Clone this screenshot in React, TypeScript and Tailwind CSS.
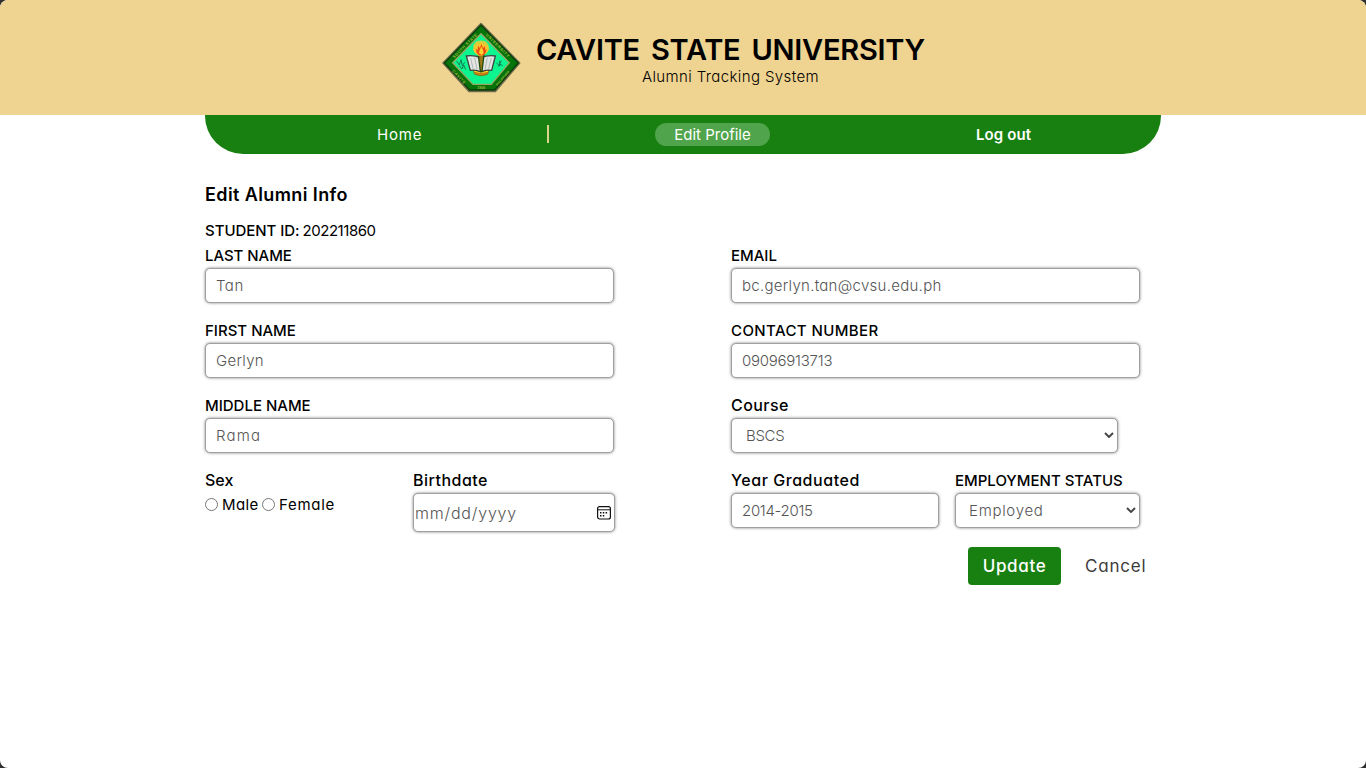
import type { ReactNode } from "react";

const box =
  "flex items-center rounded-[5px] border border-[#a0a0a0] bg-white font-light text-[15px] text-[#555] shadow-[0_0_3px_rgba(0,0,0,0.5)]";

function Seal() {
  return (
    <svg width="100" height="85" viewBox="0 0 300 255" className="block shrink-0">
      <polygon points="153,26 269,144 196,229 117,229 39,144" fill="#5d7a3c" stroke="#6f6d4c" strokeWidth="5" strokeLinejoin="round" />
      <polygon points="153,30 265,144 194,225 119,225 43,144" fill="#03730a" stroke="#0b3d0a" strokeWidth="4" />
      <polygon points="153,56 238,143 184,208 129,208 68,143" fill="#0cf58e" stroke="#98a862" strokeWidth="4" />
      <g fill="#a9b83f" fontFamily="Liberation Sans" fontWeight="700" fontSize="12" textAnchor="middle">
        <text transform="translate(108 95) rotate(-45)" letterSpacing="1.5">SOUTH STATE</text>
        <text transform="translate(201 95) rotate(45)" letterSpacing="2.5">UNIVERSITY</text>
        <text transform="translate(84 189) rotate(48)" letterSpacing="2">CAVITE</text>
        <text transform="translate(220 192) rotate(-49)" fontSize="9">PHILIPPINES</text>
        <text x="154" y="222" fontSize="11">1906</text>
      </g>
      <g fill="none" stroke="#137c55" strokeWidth="3">
        <path d="M80 138l8 12 5-16 4 18 7-10M88 152l8 10 5-12 6 14" />
        <path d="M199 143l8 8 7-14M204 154l5-7 9 5M209 137v18" />
      </g>
      <path d="M129 164q23 8 49 0l-5 14q-20 9-39 0z" fill="#c97f13" stroke="#6c651a" strokeWidth="2" />
      <path d="M133 169q20 7 41 0" fill="none" stroke="#ffe62e" strokeWidth="3" />
      <path d="M109 123q22-4 43 6 22-10 44-6l-11 43q-20-3-32 5-14-8-32-5z" fill="#e2e5e3" stroke="#3c4440" strokeWidth="4" />
      <path d="M122 130l8 34M134 128l7 36M184 129l-9 35M172 128l-7 36" stroke="#98a29c" strokeWidth="2" />
      <path d="M145 119h17l-6 50h-5z" fill="#9a7a18" stroke="#234a0f" strokeWidth="4" />
      <path d="M133 112l-4-10 7 1-5-12 9 3-1-12 9 5 6-8 5 8 8-4-1 11 9-3-4 11 6 1-7 10-12 9h-13z" fill="#ffbd28" />
      <path d="M131 90a23 19 0 0 1 44 0l3 11-9 15h-31l-9-14z" fill="#ffc82e" opacity="0.75" />
      <path d="M140 113l-3-12 6 5 1-14 6 8 4-14 5 14 6-7 1 13 5-4-5 13-8 6h-10z" fill="#ed4a12" />
      <path d="M147 114l2-9 5-10 5 10 2 9-6 6z" fill="#ffd42c" />
    </svg>
  );
}

function Label({ children, className }: { children: ReactNode; className: string }) {
  return <div className={`h-[25px] whitespace-nowrap font-medium text-black ${className}`}>{children}</div>;
}

function Chevron() {
  return (
    <svg width="10" height="6" viewBox="0 0 10 6" className="mb-[3px] block shrink-0">
      <path d="M1 1l4 4 4-4" fill="none" stroke="#444" strokeWidth="1.9" />
    </svg>
  );
}

function Radio() {
  return <span className="mb-[2px] block size-[13px] shrink-0 rounded-full border border-[#767676] bg-white" />;
}

function Calendar() {
  return (
    <svg width="14" height="14" viewBox="0 0 14 14" className="block shrink-0">
      <rect x="0.6" y="0.6" width="12.8" height="12.4" rx="2" fill="none" stroke="#111" strokeWidth="1.2" />
      <path d="M1 3.8h12" stroke="#111" strokeWidth="1" />
      <g fill="#111">
        <rect x="3" y="6" width="1.5" height="1.5" />
        <rect x="5.8" y="6" width="1.5" height="1.5" />
        <rect x="8.6" y="6" width="1.5" height="1.5" />
        <rect x="3" y="9" width="1.5" height="1.5" />
        <rect x="5.8" y="9" width="1.5" height="1.5" />
      </g>
    </svg>
  );
}

export default function App() {
  return (
    <div className="h-screen bg-[#303030]">
      <div className="h-full overflow-hidden rounded-lg bg-white font-['Inter',sans-serif] text-black [font-feature-settings:'cv11']">
        <header className="flex h-[115px] bg-[#efd391] pl-[430px]">
          <div className="pt-[15px]">
            <Seal />
          </div>
          <div className="ml-[5px] flex w-[391px] flex-col items-center pt-[32px]">
            <h1 className="whitespace-nowrap text-[29px] font-semibold leading-9 tracking-[-0.25px] [word-spacing:4px]">CAVITE STATE UNIVERSITY</h1>
            <p className="text-[15px] font-light leading-[18px] tracking-[0.39px]">Alumni Tracking System</p>
          </div>
        </header>

        <nav className="mx-auto flex h-[39px] w-[956px] items-center rounded-b-[38px] bg-[#188010] text-[15px] text-white">
          <div className="w-[342px] pl-[172px] pt-[2px] tracking-[0.8px]">Home</div>
          <div className="mt-[-1px] h-[18px] w-[2px] bg-[#dcd488]" />
          <div className="ml-[106px] flex h-[23px] w-[115px] items-center justify-center rounded-full bg-[#50a44b] pt-[2px]">Edit Profile</div>
          <div className="ml-[206px] pt-[2px] font-semibold tracking-[0.1px]">Log out</div>
        </nav>

        <main className="mx-auto w-[956px] pt-[27px]">
          <h2 className="text-[18px] font-semibold leading-7 tracking-[0.4px]">Edit Alumni Info</h2>
          <div className="mt-[9px] flex h-[25px] items-center gap-[3px] pt-[2px] text-[15px]">
            <span className="font-medium tracking-[-0.05px]">STUDENT ID:</span>
            <span className="tracking-[-0.45px]">202211860</span>
          </div>

          <form className="flex gap-[117px]">
            <div className="flex w-[409px] flex-col gap-[15px]">
              <div>
                <Label className="text-[15px] leading-[26px] tracking-[-0.05px]">LAST NAME</Label>
                <div className={`${box} h-[35px] pl-[10px] pt-[2px] tracking-[0.5px]`}>Tan</div>
              </div>
              <div>
                <Label className="text-[15px] leading-[26px]">FIRST NAME</Label>
                <div className={`${box} h-[35px] pl-[10px] pt-[2px] tracking-[0.3px]`}>Gerlyn</div>
              </div>
              <div>
                <Label className="text-[15px] leading-[26px]">MIDDLE NAME</Label>
                <div className={`${box} h-[35px] pl-[10px] pt-[2px] tracking-[1.15px]`}>Rama</div>
              </div>
              <div className="flex">
                <div className="w-[208px] shrink-0">
                  <Label className="text-[16px] leading-6">Sex</Label>
                  <div className="flex h-6 items-center text-[15px]">
                    <Radio />
                    <span className="ml-[4px] w-[40px] pt-[1px] tracking-[0.4px]">Male</span>
                    <Radio />
                    <span className="ml-[4px] pt-[1px] tracking-[0.71px]">Female</span>
                  </div>
                </div>
                <div className="w-[202px] shrink-0">
                  <Label className="text-[16px] leading-6 tracking-[0.49px]">Birthdate</Label>
                  <div className={`${box} h-[39px] justify-between pl-[1px] pr-[3px]`}>
                    <span className="text-[16px] tracking-[0.81px]">mm/dd/yyyy</span>
                    <Calendar />
                  </div>
                </div>
              </div>
            </div>

            <div className="flex w-[430px] flex-col gap-[15px]">
              <div>
                <Label className="text-[15px] leading-[26px]">EMAIL</Label>
                <div className={`${box} h-[35px] w-[409px] pl-[10px] pt-[2px] tracking-[0.28px]`}>bc.gerlyn.tan@cvsu.edu.ph</div>
              </div>
              <div>
                <Label className="text-[15px] leading-[26px] tracking-[0.4px]">CONTACT NUMBER</Label>
                <div className={`${box} h-[35px] w-[409px] pl-[10px] pt-[2px] tracking-[-0.25px]`}>09096913713</div>
              </div>
              <div>
                <Label className="text-[16px] leading-6 tracking-[0.45px]">Course</Label>
                <div className={`${box} h-[35px] w-[387px] justify-between pl-[14px] pr-[3px] pt-[2px] tracking-[-0.3px]`}>
                  BSCS
                  <Chevron />
                </div>
              </div>
              <div className="flex gap-[16px]">
                <div>
                  <Label className="text-[16px] leading-6 tracking-[0.55px]">Year Graduated</Label>
                  <div className={`${box} h-[35px] w-[208px] pl-[10px] pt-[2px] tracking-[-0.3px]`}>2014-2015</div>
                </div>
                <div>
                  <Label className="text-[15px] leading-[26px]">EMPLOYMENT STATUS</Label>
                  <div className={`${box} h-[35px] w-[185px] justify-between pl-[13px] pr-[3px] pt-[2px] tracking-[0.7px]`}>
                    Employed
                    <Chevron />
                  </div>
                </div>
              </div>
              <div className="mt-[4px] flex items-center pl-[237px] text-[17px]">
                <div className="flex h-[38px] w-[93px] shrink-0 items-center justify-center rounded-[4px] bg-[#188010] pt-[2px] font-medium tracking-[0.65px] text-white">Update</div>
                <div className="ml-[24px] pt-[2px] tracking-[0.81px] text-[#3c3c3c]">Cancel</div>
              </div>
            </div>
          </form>
        </main>
      </div>
    </div>
  );
}
